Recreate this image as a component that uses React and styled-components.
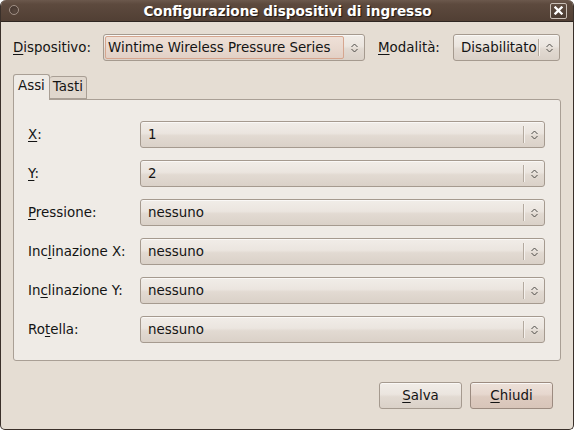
import styled, { createGlobalStyle } from 'styled-components';

const GlobalStyle = createGlobalStyle`
    html, body {
        margin: 0;
        padding: 0;
        background: #ffffff;
    }
    body {
        font-family: "DejaVu Sans", "Liberation Sans", sans-serif;
        font-size: 13.4px;
        color: #141414;
    }
`;

const Chevrons = () => (
    <svg width='7' height='10' viewBox='0 0 7 10'>
        <polyline points='0.5,4 3.5,1 6.5,4' fill='none' stroke='#4d4a47' strokeWidth='1' />
        <polyline points='0.5,6 3.5,9 6.5,6' fill='none' stroke='#4d4a47' strokeWidth='1' />
    </svg>
);

const Combo = ({ width, focused, children }) => (
    <ComboBox $width={width}>
        <ComboText $focused={focused}>{children}</ComboText>
        {!focused && <ComboSep />}
        <ComboArrow>
            <Chevrons />
        </ComboArrow>
    </ComboBox>
);

const rows = [
    { pre: '', key: 'X', post: ':', value: '1' },
    { pre: '', key: 'Y', post: ':', value: '2' },
    { pre: '', key: 'P', post: 'ressione:', value: 'nessuno' },
    { pre: 'Inc', key: 'l', post: 'inazione X:', value: 'nessuno' },
    { pre: 'In', key: 'c', post: 'linazione Y:', value: 'nessuno' },
    { pre: 'Ro', key: 't', post: 'ella:', value: 'nessuno' },
];

const App = () => {
    return (
        <>
            <GlobalStyle />
            <Window>
                <TitleBar>
                    <MenuDot />
                    <Title>Configurazione dispositivi di ingresso</Title>
                    <CloseBtn>
                        <svg width='9' height='9' viewBox='0 0 9 9'>
                            <path d='M1.5 1.5 L7.5 7.5 M7.5 1.5 L1.5 7.5' stroke='#ffffff' strokeWidth='2.3' strokeLinecap='square' />
                        </svg>
                    </CloseBtn>
                </TitleBar>
                <Body>
                    <TopRow>
                        <Label $width={90}>
                            <U>D</U>ispositivo:
                        </Label>
                        <Combo width={262} focused>
                            Wintime Wireless Pressure Series
                        </Combo>
                        <Label $width={75} $gap={13}>
                            <U>M</U>odalità:
                        </Label>
                        <Combo width={107}>Disabilitato</Combo>
                    </TopRow>
                    <Tabs>
                        <Tab $active>Assi</Tab>
                        <Tab>Tasti</Tab>
                    </Tabs>
                    <Panel>
                        {rows.map((r) => (
                            <AxisRow key={r.key + r.post}>
                                <Label>
                                    {r.pre}
                                    <U>{r.key}</U>
                                    {r.post}
                                </Label>
                                <Combo width={405}>{r.value}</Combo>
                            </AxisRow>
                        ))}
                    </Panel>
                    <Buttons>
                        <Button>
                            <U>S</U>alva
                        </Button>
                        <Button $default>
                            <U>C</U>hiudi
                        </Button>
                    </Buttons>
                </Body>
            </Window>
        </>
    );
};

export default App;

const Window = styled.div`
    width: 574px;
    height: 430px;
    box-sizing: border-box;
    display: flex;
    flex-direction: column;
    background: #e5ddd3;
    border: 1px solid #3a302a;
    border-top: none;
    border-radius: 6px 6px 5px 5px;
    overflow: hidden;
`;

const TitleBar = styled.div`
    height: 22px;
    box-sizing: border-box;
    display: flex;
    align-items: center;
    padding: 0 6px 0 9px;
    background: linear-gradient(#6b584c 0%, #5d4a3e 20%, #513f34 100%);
    border-bottom: 1px solid #2f2621;
    margin: 0 -1px;
`;

const MenuDot = styled.div`
    width: 8px;
    height: 8px;
    border-radius: 50%;
    border: 1px solid #a09086;
    background: radial-gradient(circle at 60% 70%, #5b4a40, #3e3029);
    margin-top: -1px;
`;

const Title = styled.div`
    flex: 1;
    text-align: center;
    font-weight: bold;
    font-size: 13.6px;
    color: #ffffff;
    text-shadow: 1px 1px 1px #1e1712;
    margin-left: 6px;
    padding-top: 1px;
`;

const CloseBtn = styled.div`
    width: 17px;
    height: 16px;
    box-sizing: border-box;
    border: 1px solid #c9bfb6;
    border-radius: 2px;
    background: linear-gradient(#5f4d41, #4b3b31);
    display: flex;
    align-items: center;
    justify-content: center;
    margin-right: 1px;
`;

const Body = styled.div`
    flex: 1;
    display: flex;
    flex-direction: column;
    padding: 12px 11px 0 12px;
`;

const TopRow = styled.div`
    display: flex;
    align-items: center;
    height: 27px;
`;

const Label = styled.div`
    width: ${(p) => (p.$width ? p.$width + 'px' : 'auto')};
    margin-left: ${(p) => p.$gap || 0}px;
    flex-shrink: 0;
    white-space: nowrap;
`;

const U = styled.span`
    text-decoration: underline;
    text-underline-offset: 2px;
`;

const ComboBox = styled.div`
    width: ${(p) => p.$width}px;
    height: 27px;
    box-sizing: border-box;
    flex-shrink: 0;
    display: flex;
    align-items: stretch;
    border: 1px solid #a59a8f;
    border-radius: 3px;
    background: linear-gradient(#f1ede8 0%, #ebe5df 45%, #e2dad2 55%, #dad1c8 100%);
    box-shadow: inset 0 1px 0 #faf8f6;
`;

const ComboText = styled.div`
    flex: 1;
    display: flex;
    align-items: center;
    white-space: nowrap;
    overflow: hidden;
    padding-left: ${(p) => (p.$focused ? '2px' : '7px')};
    margin: ${(p) => (p.$focused ? '1px 0 1px 1px' : '0')};
    border: ${(p) => (p.$focused ? '1px solid #d6a68f' : 'none')};
    border-radius: 2px;
    background: ${(p) =>
        p.$focused ? 'linear-gradient(#eee0d7 0%, #e9d9cf 50%, #e2d0c5 100%)' : 'transparent'};
`;

const ComboSep = styled.div`
    width: 1px;
    margin: 4px 0;
    background: #b3a99e;
    box-shadow: 1px 0 0 #f5f1ed;
`;

const ComboArrow = styled.div`
    width: 20px;
    display: flex;
    align-items: center;
    justify-content: center;
`;

const Tabs = styled.div`
    display: flex;
    align-items: flex-end;
    margin-top: 13px;
    height: 25px;
    position: relative;
    z-index: 1;
`;

const Tab = styled.div`
    box-sizing: border-box;
    height: ${(p) => (p.$active ? '26px' : '23px')};
    padding: ${(p) => (p.$active ? '3px 4px 0 4px' : '2px 3px 0 3px')};
    border: 1px solid #a99f95;
    border-bottom: ${(p) => (p.$active ? 'none' : '1px solid #a99f95')};
    border-left: ${(p) => (p.$active ? '1px solid #a99f95' : 'none')};
    border-radius: 3px 3px 0 0;
    background: ${(p) => (p.$active ? '#efebe6' : '#e0d7cd')};
    margin-bottom: ${(p) => (p.$active ? '-1px' : '0')};
    display: flex;
    align-items: flex-start;
`;

const Panel = styled.div`
    width: 548px;
    height: 262px;
    box-sizing: border-box;
    border: 1px solid #a99f95;
    border-radius: 0 3px 3px 3px;
    background: #efebe6;
    padding: 21px 14px 0 14px;
    display: flex;
    flex-direction: column;
    gap: 12px;
`;

const AxisRow = styled.div`
    display: grid;
    grid-template-columns: 112px 405px;
    align-items: center;
`;

const Buttons = styled.div`
    display: flex;
    justify-content: flex-end;
    gap: 8px;
    margin-top: 21px;
    padding-right: 9px;
`;

const Button = styled.div`
    width: 83px;
    height: 27px;
    box-sizing: border-box;
    display: flex;
    align-items: center;
    justify-content: center;
    border: 1px solid ${(p) => (p.$default ? '#9c8b80' : '#a59a8f')};
    border-radius: 3px;
    background: ${(p) =>
        p.$default
            ? 'linear-gradient(#ede1d9 0%, #e6d7ce 45%, #ddcbc0 55%, #d8c5b9 100%)'
            : 'linear-gradient(#f1ede8 0%, #ebe5df 45%, #e2dad2 55%, #dad1c8 100%)'};
    box-shadow: inset 0 1px 0 #faf8f6;
`;
